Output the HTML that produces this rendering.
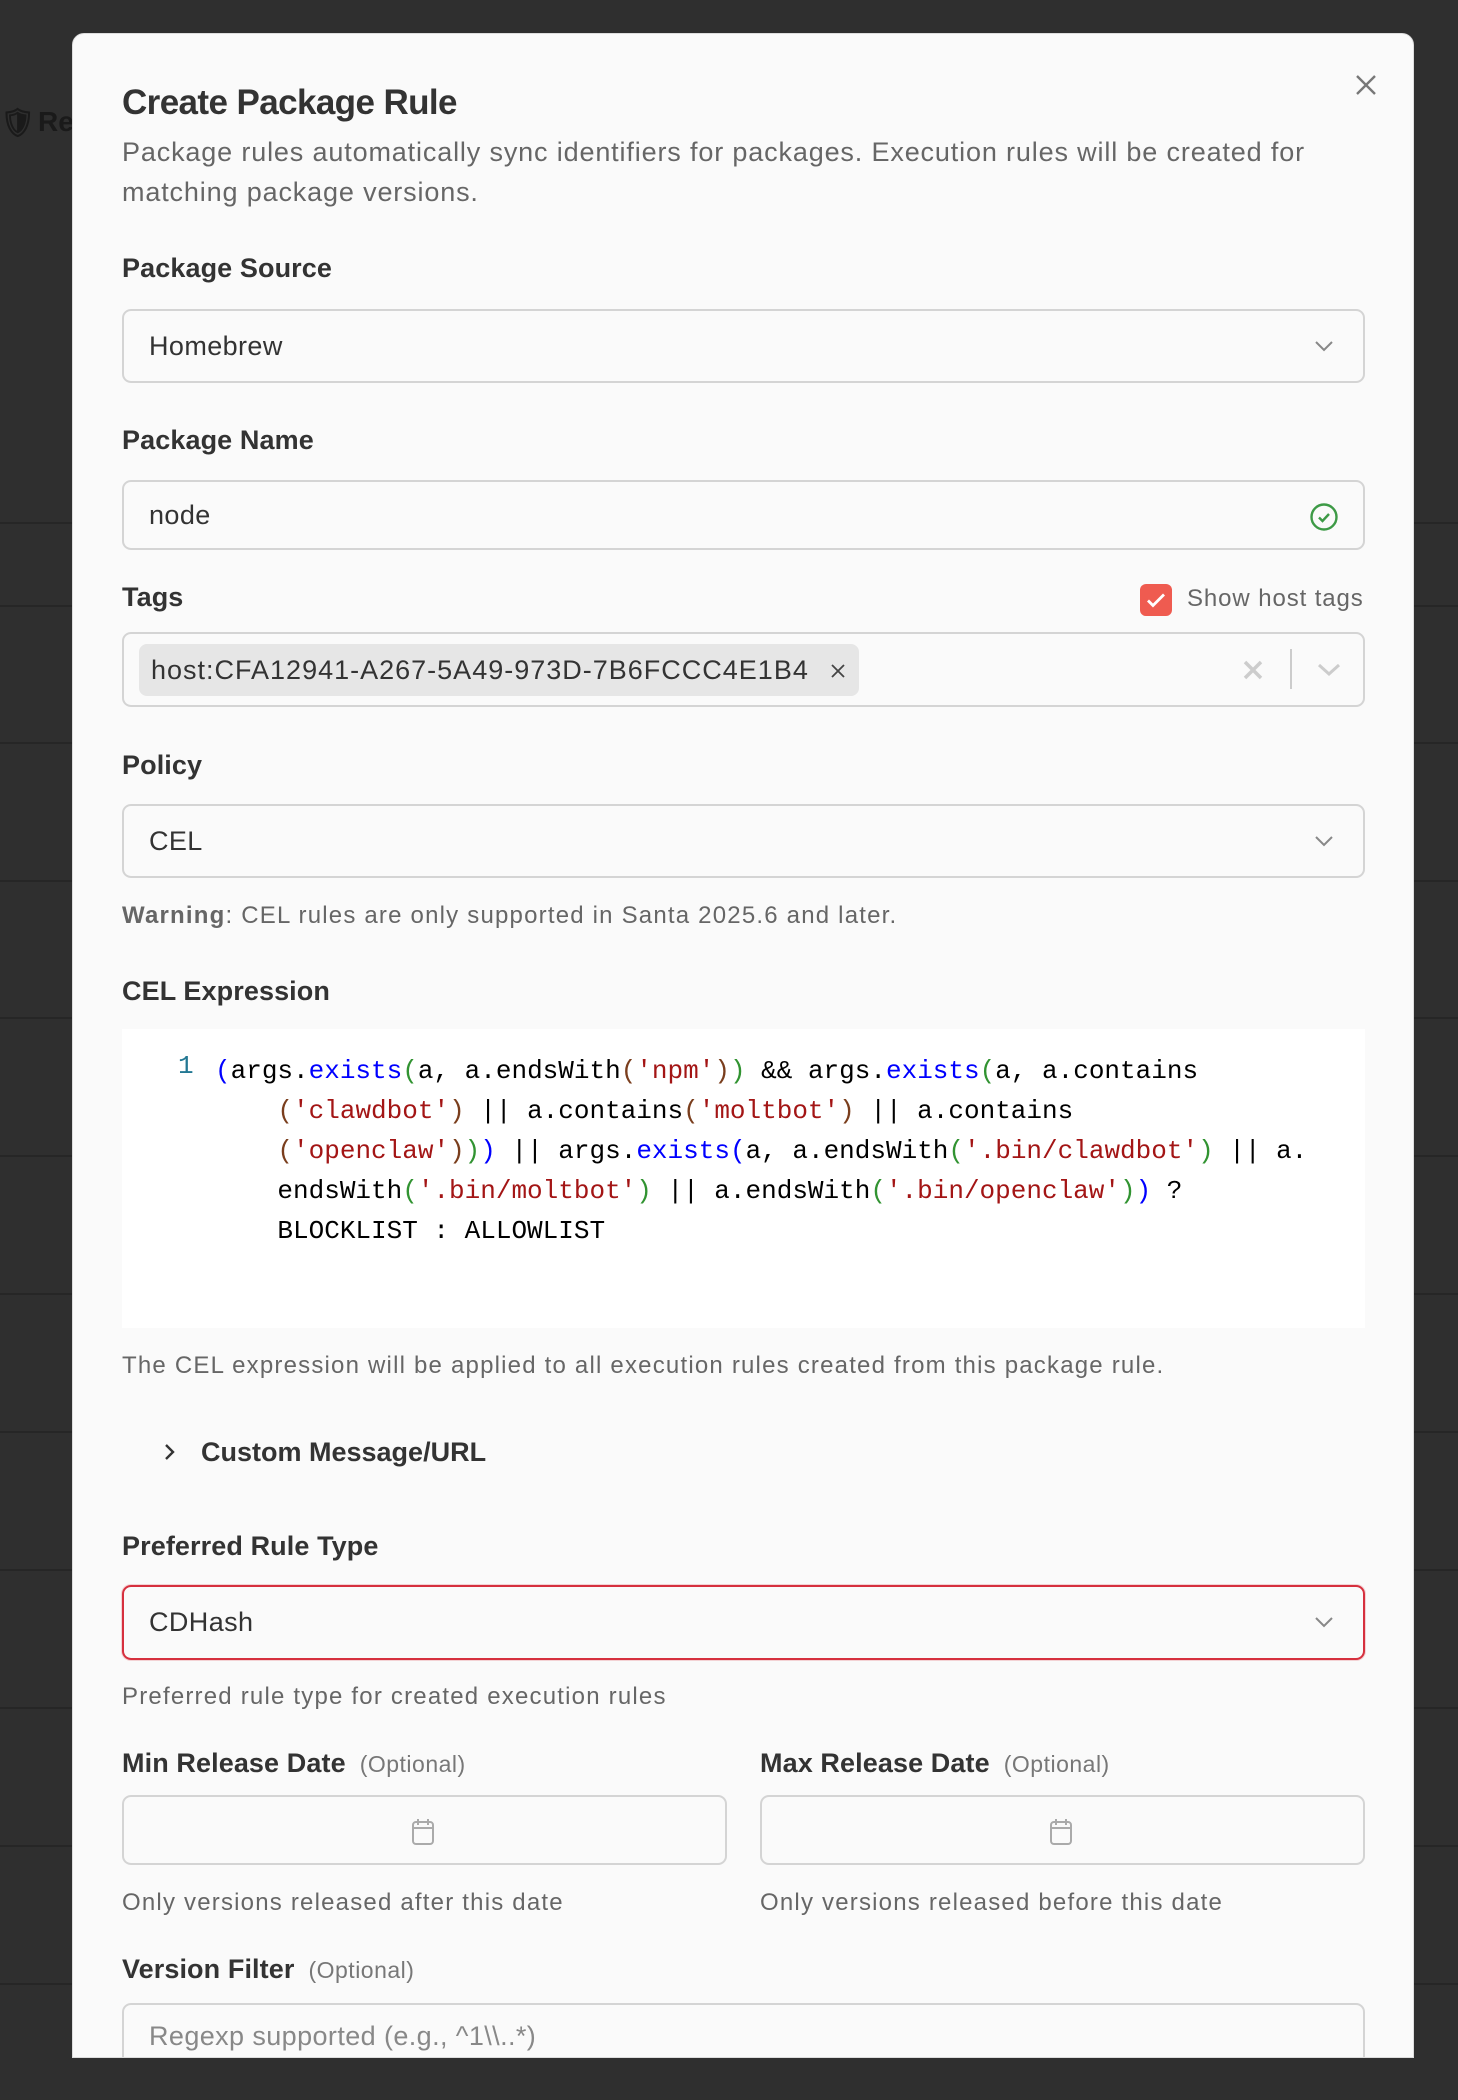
<!DOCTYPE html>
<html><head><meta charset="utf-8"><style>
*{box-sizing:border-box;margin:0;padding:0}
body{width:1458px;height:2100px;background:#2f2f2f;position:relative;overflow:hidden;font-family:"Liberation Sans",Arial,sans-serif}
.ln{position:absolute;left:0;width:1458px;height:2px;background:#262626}
.modal{position:absolute;left:72px;top:33px;width:1342px;height:2025px;background:#fafafa;border-radius:12px 12px 0 0;overflow:hidden;border:1px solid #ddd}
.a{position:absolute}
.lbl{position:absolute;left:49px;font-size:27px;color:#333;font-weight:bold;letter-spacing:0.1px}
.opt{font-size:23px;color:#777;font-weight:normal;margin-left:14px;letter-spacing:0.5px}
.box{position:absolute;left:49px;width:1243px;border:2px solid #d4d4d4;border-radius:9px;background:#fafafa}
.val{position:absolute;left:25px;font-size:27px;color:#333;letter-spacing:0.4px}
.help{position:absolute;left:49px;font-size:24px;color:#666;letter-spacing:1.2px}
.code{font-family:"Liberation Mono",monospace;font-size:26px;white-space:pre;position:absolute;color:#000}
.b{color:#0000ff}.s{color:#a31515}.g{color:#319331}.br{color:#7a3e1d}
</style></head><body>
<div class="ln" style="top:522px"></div><div class="ln" style="top:605px"></div>
<div class="ln" style="top:742px"></div><div class="ln" style="top:880px"></div>
<div class="ln" style="top:1017px"></div><div class="ln" style="top:1155px"></div>
<div class="ln" style="top:1293px"></div><div class="ln" style="top:1431px"></div>
<div class="ln" style="top:1569px"></div><div class="ln" style="top:1707px"></div>
<div class="ln" style="top:1845px"></div><div class="ln" style="top:1983px"></div>
<div class="a" style="left:0;top:106px;font-size:28px;color:#1a1a1a;font-weight:bold">&#x1F6E1;</div>
<div class="a" style="left:38px;top:106px;font-size:28px;color:#1a1a1a;font-weight:bold">Re</div>

<div class="modal">
<svg class="a" style="left:1282px;top:40px" width="22" height="22" viewBox="0 0 22 22"><path d="M2 2L20 20M20 2L2 20" stroke="#777" stroke-width="2.4"/></svg>
<div class="a" style="left:49px;top:49px;font-size:35px;font-weight:bold;color:#333;letter-spacing:-0.6px">Create Package Rule</div>
<div class="a" style="left:49px;top:98px;width:1260px;font-size:27px;line-height:40px;color:#666;letter-spacing:0.85px">Package rules automatically sync identifiers for packages. Execution rules will be created for<br>matching package versions.</div>

<div class="lbl" style="top:219px">Package Source</div>
<div class="box" style="top:275px;height:74px"><div class="val" style="top:20px">Homebrew</div>
<svg class="a" style="right:28px;top:28px" width="22" height="14" viewBox="0 0 22 14"><path d="M3 3l8 8 8-8" fill="none" stroke="#888" stroke-width="2"/></svg></div>

<div class="lbl" style="top:391px">Package Name</div>
<div class="box" style="top:446px;height:70px"><div class="val" style="top:18px">node</div>
<svg class="a" style="right:24px;top:20px" width="30" height="30" viewBox="0 0 30 30"><circle cx="15" cy="15" r="12.5" fill="none" stroke="#3d9a46" stroke-width="2.4"/><path d="M10 15.5l3.5 3.5 6.5-7" fill="none" stroke="#3d9a46" stroke-width="2.4"/></svg></div>

<div class="lbl" style="top:548px">Tags</div>
<div class="a" style="left:1067px;top:550px;width:32px;height:32px;background:#ef5b50;border-radius:6px"><svg width="32" height="32" viewBox="0 0 32 32"><path d="M8 16.5l5 5 11-11" fill="none" stroke="#fff" stroke-width="2.8"/></svg></div>
<div class="a" style="left:1114px;top:551px;font-size:24px;color:#666;letter-spacing:0.9px">Show host tags</div>
<div class="box" style="top:598px;height:75px">
<div class="a" style="left:15px;top:10px;width:720px;height:52px;background:#e6e6e6;border-radius:8px"><span class="a" style="left:12px;top:11px;font-size:27px;color:#333;letter-spacing:1px">host:CFA12941-A267-5A49-973D-7B6FCCC4E1B4</span><svg class="a" style="right:14px;top:20px" width="14" height="14" viewBox="0 0 14 14"><path d="M1 1l12 12M13 1L1 13" stroke="#444" stroke-width="1.8"/></svg></div>
<svg class="a" style="left:1119px;top:26px" width="20" height="20" viewBox="0 0 20 20"><path d="M2 2l16 16M18 2L2 18" stroke="#ccc" stroke-width="3.5"/></svg>
<div class="a" style="left:1166px;top:15px;width:2px;height:40px;background:#ccc"></div>
<svg class="a" style="left:1192px;top:28px" width="26" height="16" viewBox="0 0 26 16"><path d="M3 3l10 9 10-9" fill="none" stroke="#ccc" stroke-width="3"/></svg></div>

<div class="lbl" style="top:716px">Policy</div>
<div class="box" style="top:770px;height:74px"><div class="val" style="top:20px">CEL</div>
<svg class="a" style="right:28px;top:28px" width="22" height="14" viewBox="0 0 22 14"><path d="M3 3l8 8 8-8" fill="none" stroke="#888" stroke-width="2"/></svg></div>
<div class="help" style="top:868px"><b style="color:#666">Warning</b>: CEL rules are only supported in Santa 2025.6 and later.</div>

<div class="lbl" style="top:942px">CEL Expression</div>
<div class="a" style="left:49px;top:995px;width:1243px;height:299px;background:#fff"></div>
<div class="code" style="left:105px;top:1017px;color:#237893">1</div>
<div class="code" style="left:142px;top:1017px;line-height:40px"><span class="b">(</span>args.<span class="b">exists</span><span class="g">(</span>a, a.endsWith<span class="br">(</span><span class="s">'npm'</span><span class="br">)</span><span class="g">)</span> &amp;&amp; args.<span class="b">exists</span><span class="g">(</span>a, a.contains
    <span class="br">(</span><span class="s">'clawdbot'</span><span class="br">)</span> || a.contains<span class="br">(</span><span class="s">'moltbot'</span><span class="br">)</span> || a.contains
    <span class="br">(</span><span class="s">'openclaw'</span><span class="br">)</span><span class="g">)</span><span class="b">)</span> || args.<span class="b">exists</span><span class="b">(</span>a, a.endsWith<span class="g">(</span><span class="s">'.bin/clawdbot'</span><span class="g">)</span> || a.
    endsWith<span class="g">(</span><span class="s">'.bin/moltbot'</span><span class="g">)</span> || a.endsWith<span class="g">(</span><span class="s">'.bin/openclaw'</span><span class="g">)</span><span class="b">)</span> ?
    BLOCKLIST : ALLOWLIST</div>
<div class="help" style="top:1318px">The CEL expression will be applied to all execution rules created from this package rule.</div>

<svg class="a" style="left:90px;top:1408px" width="14" height="20" viewBox="0 0 14 20"><path d="M3 3l7 7-7 7" fill="none" stroke="#333" stroke-width="2.4"/></svg>
<div class="a" style="left:128px;top:1403px;font-size:27px;color:#333;font-weight:bold">Custom Message/URL</div>

<div class="lbl" style="top:1497px">Preferred Rule Type</div>
<div class="box" style="top:1551px;height:75px;border-color:#d6303e;box-shadow:0 0 0 1px rgba(214,48,62,0.2)"><div class="val" style="top:20px">CDHash</div>
<svg class="a" style="right:28px;top:28px" width="22" height="14" viewBox="0 0 22 14"><path d="M3 3l8 8 8-8" fill="none" stroke="#888" stroke-width="2"/></svg></div>
<div class="help" style="top:1649px">Preferred rule type for created execution rules</div>

<div class="lbl" style="top:1714px">Min Release Date<span class="opt">(Optional)</span></div>
<div class="lbl" style="top:1714px;left:687px">Max Release Date<span class="opt">(Optional)</span></div>
<div class="box" style="top:1761px;height:70px;width:605px"><svg class="a" style="left:286px;top:20px" width="26" height="30" viewBox="0 0 26 30"><rect x="3" y="5" width="20" height="22" rx="3" fill="none" stroke="#aaa" stroke-width="2"/><path d="M3 11h20M8 2v6M18 2v6" stroke="#aaa" stroke-width="2"/></svg></div>
<div class="box" style="top:1761px;height:70px;width:605px;left:687px"><svg class="a" style="left:286px;top:20px" width="26" height="30" viewBox="0 0 26 30"><rect x="3" y="5" width="20" height="22" rx="3" fill="none" stroke="#aaa" stroke-width="2"/><path d="M3 11h20M8 2v6M18 2v6" stroke="#aaa" stroke-width="2"/></svg></div>
<div class="help" style="top:1855px">Only versions released after this date</div>
<div class="help" style="top:1855px;left:687px">Only versions released before this date</div>

<div class="lbl" style="top:1920px">Version Filter<span class="opt">(Optional)</span></div>
<div class="box" style="top:1969px;height:80px"><div class="val" style="top:16px;color:#888">Regexp supported (e.g., ^1\\..*)</div></div>
</div>
</body></html>
